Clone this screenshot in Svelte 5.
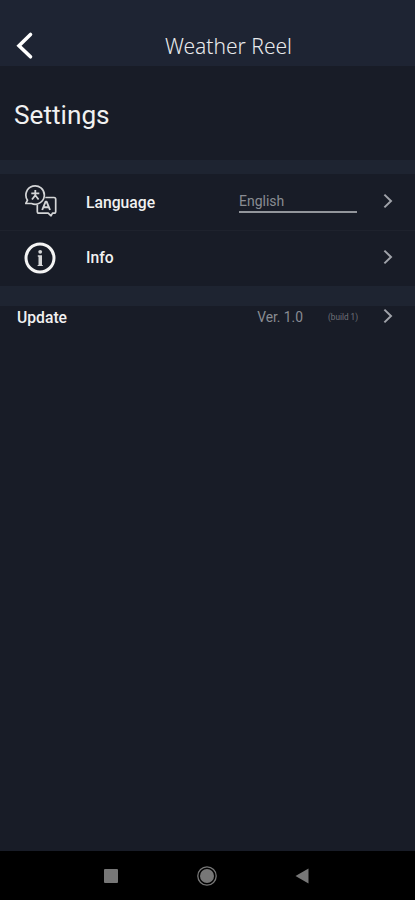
<script>
  const version = { label: 'Ver. 1.0', build: '(build 1)' };
  let language = $state('English');
</script>

{#snippet chevron()}
  <svg class="chevron" width="12" height="18" viewBox="0 0 12 18" aria-hidden="true">
    <path d="M2.400 2.600 9 9l-6.600 6.400" fill="none" stroke="currentColor" stroke-width="2" />
  </svg>
{/snippet}

<div class="screen">
  <header class="topbar">
    <button class="back" aria-label="Back">
      <svg width="20" height="30" viewBox="0 0 20 30">
        <path d="M16.500 3.500 5 14.800l11.500 11" fill="none" stroke="#fff" stroke-width="3.600" stroke-linecap="round" />
      </svg>
    </button>
    <span class="app-name">Weather Reel</span>
  </header>

  <h1 class="heading">Settings</h1>

  <section class="group">
    <div class="row">
      <svg class="icon" width="36" height="36" viewBox="0 0 36 36" fill="none" stroke="#d4d5d7" stroke-width="1.700" stroke-linejoin="round">
        <path d="M3.800 19.500l1.700-3.300a9.200 9.200 0 1 1 4 3.300z" />
        <path d="M23.300 13.500h8.700q1.700 0 1.700 1.700v12.300q0 1.700-1.700 1.700h-1.500l-1.500 2.600-2.800-2.600h-9.200q-1.700 0-1.700-1.700v-6.500" />
        <path d="M13.300 6v3M9.300 9.300h8M13.300 9.300v2l-3.300 4.200M13.300 11.300l3.300 4.200" stroke-width="1.800" />
        <path d="M20.200 26l3.300-8.200h1.200l3.300 8.200M21.500 23.200h5.200" stroke-width="1.900" />
      </svg>
      <span class="label">Language</span>
      <span class="field">{language}</span>
      {@render chevron()}
    </div>
    <div class="row">
      <svg class="icon" width="36" height="36" viewBox="0 0 36 36">
        <circle cx="18" cy="18" r="14" fill="none" stroke="#f4f4f4" stroke-width="3" />
        <circle cx="18.200" cy="11.800" r="1.900" fill="#d4d5d7" />
        <path d="M15.800 15.300h4.200v10.700h-3.500v-9.200h-.7z" fill="#d4d5d7" />
        <path d="M15.600 25h5.200v1h-5.200z" fill="#d4d5d7" />
      </svg>
      <span class="label">Info</span>
      {@render chevron()}
    </div>
  </section>

  <section class="about">
    <div class="update">
      <span class="label">Update</span>
      <span class="version">{version.label}</span>
      <span class="build">{version.build}</span>
      {@render chevron()}
    </div>
  </section>

  <nav class="navbar">
    <svg width="14" height="14" viewBox="0 0 14 14"><rect width="14" height="14" rx="1" fill="#777" /></svg>
    <svg width="20" height="20" viewBox="0 0 20 20">
      <circle cx="10" cy="10" r="9.200" fill="none" stroke="#777" stroke-width="1.300" />
      <circle cx="10" cy="10" r="7" fill="#777" />
    </svg>
    <svg width="14" height="16" viewBox="0 0 14 16"><path d="M13.500 .5v15L.5 8z" fill="#777" /></svg>
  </nav>
</div>

<style>
  :global(body) {
    background: #181c27;
  }
  .screen {
    display: flex;
    flex-direction: column;
    width: 415px;
    height: 900px;
    overflow: hidden;
    background: #181c27;
    color: #f1f1f1;
    font-family: Roboto, sans-serif;
  }
  .topbar {
    display: grid;
    grid-template-columns: 42px 1fr;
    align-items: center;
    height: 66px;
    padding: 25px 0 0 14px;
    box-sizing: border-box;
    background: #1e2433;
  }
  .back {
    width: 20px;
    height: 30px;
    padding: 0;
    border: 0;
    background: none;
  }
  .back svg {
    display: block;
  }
  .app-name {
    padding-left: 109px;
    font: 300 21px/30px 'Noto Sans', sans-serif;
    color: #e9eaec;
    white-space: nowrap;
  }
  .heading {
    margin: 0;
    height: 94px;
    padding: 1px 0 0 14px;
    box-sizing: border-box;
    font-size: 26.200px;
    font-weight: 400;
    line-height: 96px;
  }
  .group {
    border-top: 14px solid #1e2431;
    border-bottom: 20px solid #1e2431;
  }
  .row {
    display: flex;
    align-items: center;
    height: 56px;
    padding: 0 21px 0 22px;
    box-sizing: border-box;
  }
  .row + .row {
    padding-bottom: 2px;
    border-top: 1px solid #1e222d;
  }
  .icon {
    flex: none;
    margin-right: 28px;
  }
  .label {
    flex: 1;
    font-size: 15.700px;
    font-weight: 500;
  }
  .field {
    width: 118px;
    height: 23px;
    margin: 0 25px 2px 0;
    border-bottom: 2px solid #92959b;
    font-size: 14px;
    line-height: 23px;
    color: #898c93;
    box-sizing: border-box;
  }
  .chevron {
    flex: none;
    margin-bottom: 2px;
    color: #a0a3aa;
  }
  .about {
    flex: 1;
  }
  .update {
    display: flex;
    align-items: center;
    height: 22px;
    padding: 0 21px 0 17px;
  }
  .version {
    margin-right: 25px;
    font-size: 13.800px;
    color: #898c93;
  }
  .build {
    width: 31px;
    margin-right: 23px;
    font-size: 8.200px;
    color: #70737a;
    white-space: nowrap;
  }
  .navbar {
    display: grid;
    grid-template-columns: 15px 20px 14px;
    gap: 78px;
    place-content: center;
    align-items: center;
    height: 49px;
    padding-right: 3px;
    background: #000;
  }
</style>
